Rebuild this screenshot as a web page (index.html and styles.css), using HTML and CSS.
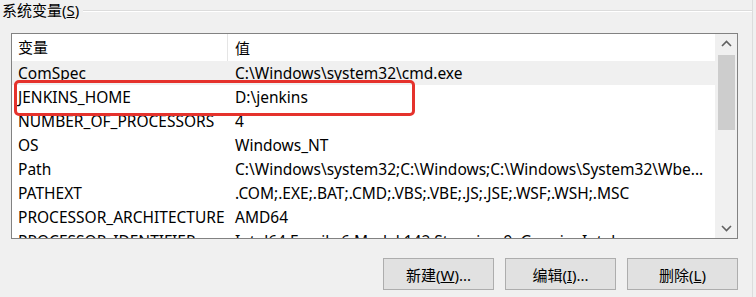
FILE: index.html
```html
<!DOCTYPE html>
<html lang="zh-CN">
<head>
    <meta charset="UTF-8">
    <title>系统变量</title>
    <link rel="stylesheet" href="styles.css">
</head>
<body>
    <div class="group">
        <div class="group-head">
            <span class="legend">系统变量(<u>S</u>)</span>
            <span class="rule"></span>
        </div>

        <div class="listbox">
            <div class="list">
                <div class="row head">
                    <span class="name">变量</span>
                    <span class="value">值</span>
                </div>
                <div class="row hover">
                    <span class="name">ComSpec</span>
                    <span class="value">C:\Windows\system32\cmd.exe</span>
                </div>
                <div class="row">
                    <span class="name">JENKINS_HOME</span>
                    <span class="value">D:\jenkins</span>
                </div>
                <div class="row">
                    <span class="name">NUMBER_OF_PROCESSORS</span>
                    <span class="value">4</span>
                </div>
                <div class="row">
                    <span class="name">OS</span>
                    <span class="value">Windows_NT</span>
                </div>
                <div class="row">
                    <span class="name">Path</span>
                    <span class="value">C:\Windows\system32;C:\Windows;C:\Windows\System32\Wbe...</span>
                </div>
                <div class="row">
                    <span class="name">PATHEXT</span>
                    <span class="value">.COM;.EXE;.BAT;.CMD;.VBS;.VBE;.JS;.JSE;.WSF;.WSH;.MSC</span>
                </div>
                <div class="row">
                    <span class="name">PROCESSOR_ARCHITECTURE</span>
                    <span class="value">AMD64</span>
                </div>
                <div class="row">
                    <span class="name">PROCESSOR_IDENTIFIER</span>
                    <span class="value">Intel64 Family 6 Model 142 Stepping 9, GenuineIntel</span>
                </div>
            </div>
            <div class="scrollbar">
                <svg class="arrow" width="11" height="7" viewBox="0 0 11 7"><path d="M1 6 L5.5 1.5 L10 6" fill="none" stroke="#606060" stroke-width="1.6"/></svg>
                <div class="track"><div class="thumb"></div></div>
                <svg class="arrow" width="11" height="7" viewBox="0 0 11 7"><path d="M1 1 L5.5 5.5 L10 1" fill="none" stroke="#606060" stroke-width="1.6"/></svg>
            </div>
            <div class="mark"></div>
        </div>

        <div class="buttons">
            <button>新建(<u>W</u>)...</button>
            <button>编辑(<u>I</u>)...</button>
            <button>删除(<u>L</u>)</button>
        </div>
    </div>
</body>
</html>
```

FILE: styles.css
```css
body {
    margin: 0;
    background: #f0f0f0;
    font-family: "Noto Sans", "Noto Sans CJK SC", sans-serif;
    font-size: 15.5px;
    color: #000;
    width: 756px;
    height: 297px;
    overflow: hidden;
}
.group {
    width: 753px;
    border-right: 1px solid #dcdcdc;
    height: 297px;
    box-sizing: border-box;
}
.group-head {
    display: flex;
    align-items: center;
    height: 22px;
}
.legend {
    padding-left: 2px;
    padding-right: 4px;
    font-size: 15px;
    line-height: 22px;
    margin-top: -2px;
}
.rule {
    flex: 1;
    border-top: 1px solid #dcdcdc;
    border-bottom: 1px solid #fff;
}
.listbox {
    position: relative;
    display: flex;
    margin: 11px 0 0 11px;
    width: 727px;
    height: 206px;
    box-sizing: border-box;
    border: 1px solid #828282;
    background: #fff;
}
.list {
    flex: 1;
    overflow: hidden;
}
.row {
    display: flex;
    height: 24px;
    align-items: center;
    white-space: nowrap;
}
.row.head {
    height: 27px;
    font-size: 15px;
}
.row.hover {
    background: #f0f0f0;
}
.name {
    width: 216px;
    padding-left: 6px;
    box-sizing: border-box;
    flex-shrink: 0;
}
.head .name {
    border-right: 1px solid #e5e5e5;
    height: 27px;
    line-height: 27px;
}
.value {
    padding-left: 7px;
}
.scrollbar {
    width: 21px;
    background: #f0f0f0;
    display: flex;
    flex-direction: column;
    align-items: center;
    border-left: 1px solid #f0f0f0;
}
.arrow {
    flex-shrink: 0;
    margin: 6px 0;
}
.track {
    flex: 1;
    width: 100%;
    padding: 0 2px;
    box-sizing: border-box;
}
.thumb {
    height: 75px;
    background: #cdcdcd;
    margin-top: 2px;
}
.mark {
    position: absolute;
    left: 2px;
    top: 46px;
    width: 401px;
    height: 36px;
    box-sizing: border-box;
    border: 3px solid #e5322c;
    border-radius: 5px;
}
.buttons {
    display: flex;
    justify-content: flex-end;
    gap: 11px;
    margin-top: 19px;
    padding-right: 14px;
}
button {
    width: 111px;
    height: 32px;
    background: #e1e1e1;
    border: 1px solid #adadad;
    font-family: "Noto Sans", "Noto Sans CJK SC", sans-serif;
    font-size: 15px;
    color: #000;
    padding: 0;
}
```
